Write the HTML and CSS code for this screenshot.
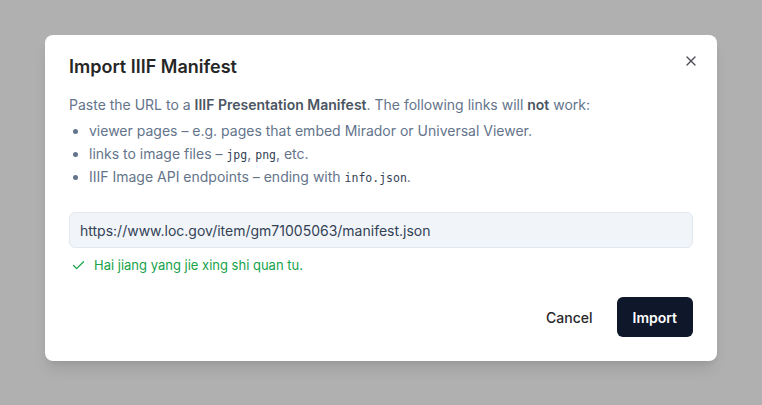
FILE: index.html
```html
<!DOCTYPE html>
<html lang="en">
<head>
<meta charset="utf-8">
<title>Import IIIF Manifest</title>
<link rel="stylesheet" href="styles.css">
</head>
<body>
<div class="overlay">
  <div class="dialog" role="dialog" aria-labelledby="dlg-title">
    <button class="close" aria-label="Close">
      <svg width="16" height="16" viewBox="0 0 24 24" fill="none" stroke="currentColor" stroke-width="2" stroke-linecap="round" stroke-linejoin="round"><path d="M18 6 6 18"/><path d="m6 6 12 12"/></svg>
    </button>
    <h2 id="dlg-title" class="title">Import IIIF Manifest</h2>
    <p class="desc">Paste the URL to a <strong>IIIF Presentation Manifest</strong>. The following links will <strong>not</strong> work:</p>
    <ul class="list">
      <li>viewer pages – e.g. pages that embed Mirador or Universal Viewer.</li>
      <li>links to image files – <code>jpg</code>, <code>png</code>, etc.</li>
      <li>IIIF Image API endpoints – ending with <code>info.json</code>.</li>
    </ul>
    <input class="url" type="text" value="https://www.loc.gov/item/gm71005063/manifest.json">
    <div class="ok">
      <svg width="15" height="15" viewBox="0 0 24 24" fill="none" stroke="currentColor" stroke-width="2" stroke-linecap="round" stroke-linejoin="round"><path d="M20 6 9 17l-5-5"/></svg>
      <span>Hai jiang yang jie xing shi quan tu.</span>
    </div>
    <div class="actions">
      <button class="btn ghost">Cancel</button>
      <button class="btn primary">Import</button>
    </div>
  </div>
</div>
</body>
</html>
```

FILE: styles.css
```css
* { box-sizing: border-box; }
html, body { margin: 0; height: 100%; }
body {
  background: #b0b0b0;
  font-family: Inter, "Noto Sans", sans-serif;
}
.overlay {
  display: flex;
  justify-content: center;
  padding-top: 35px;
}
.dialog {
  position: relative;
  width: 672px;
  background: #fff;
  border-radius: 8px;
  padding: 18px 24px 24px;
  box-shadow: 0 10px 15px -3px rgba(0,0,0,0.1), 0 4px 6px -4px rgba(0,0,0,0.1);
}
.close {
  position: absolute;
  top: 18px;
  right: 18px;
  width: 16px;
  height: 16px;
  padding: 0;
  border: 0;
  background: none;
  color: #52525b;
  display: flex;
}
.title {
  margin: 0;
  font-size: 18px;
  line-height: 28px;
  font-weight: 600;
  color: #262626;
}
.desc {
  margin: 14px 0 0;
  font-size: 14px;
  line-height: 20px;
  color: #64748b;
}
.desc strong { font-weight: 600; color: #4b5563; }
.list {
  margin: 4px 0 0;
  padding-left: 20px;
  font-size: 14px;
  line-height: 23px;
  color: #64748b;
}
.list code {
  font-family: "DejaVu Sans Mono", "Liberation Mono", monospace;
  font-size: 11.5px;
  line-height: 1;
  color: #334155;
}
.url {
  display: block;
  width: 100%;
  height: 36px;
  margin-top: 24px;
  padding: 0 10px;
  border: 1px solid #e2e8f0;
  border-radius: 6px;
  background: #f1f5f9;
  font-family: Inter, sans-serif;
  font-size: 14px;
  color: #334155;
  outline: none;
}
.ok {
  display: flex;
  align-items: center;
  gap: 8px;
  margin-top: 7px;
  padding-left: 2px;
  font-size: 13px;
  line-height: 20px;
  color: #16a34a;
}
.ok svg { flex: none; }
.actions {
  display: flex;
  justify-content: flex-end;
  gap: 8px;
  margin-top: 22px;
}
.btn {
  height: 40px;
  padding: 0 16px;
  border: 0;
  border-radius: 6px;
  font-family: Inter, sans-serif;
  font-size: 14px;
  font-weight: 500;
}
.ghost { background: transparent; color: #27272a; }
.primary { background: #0f172a; color: #fff; font-weight: 600; }
```
